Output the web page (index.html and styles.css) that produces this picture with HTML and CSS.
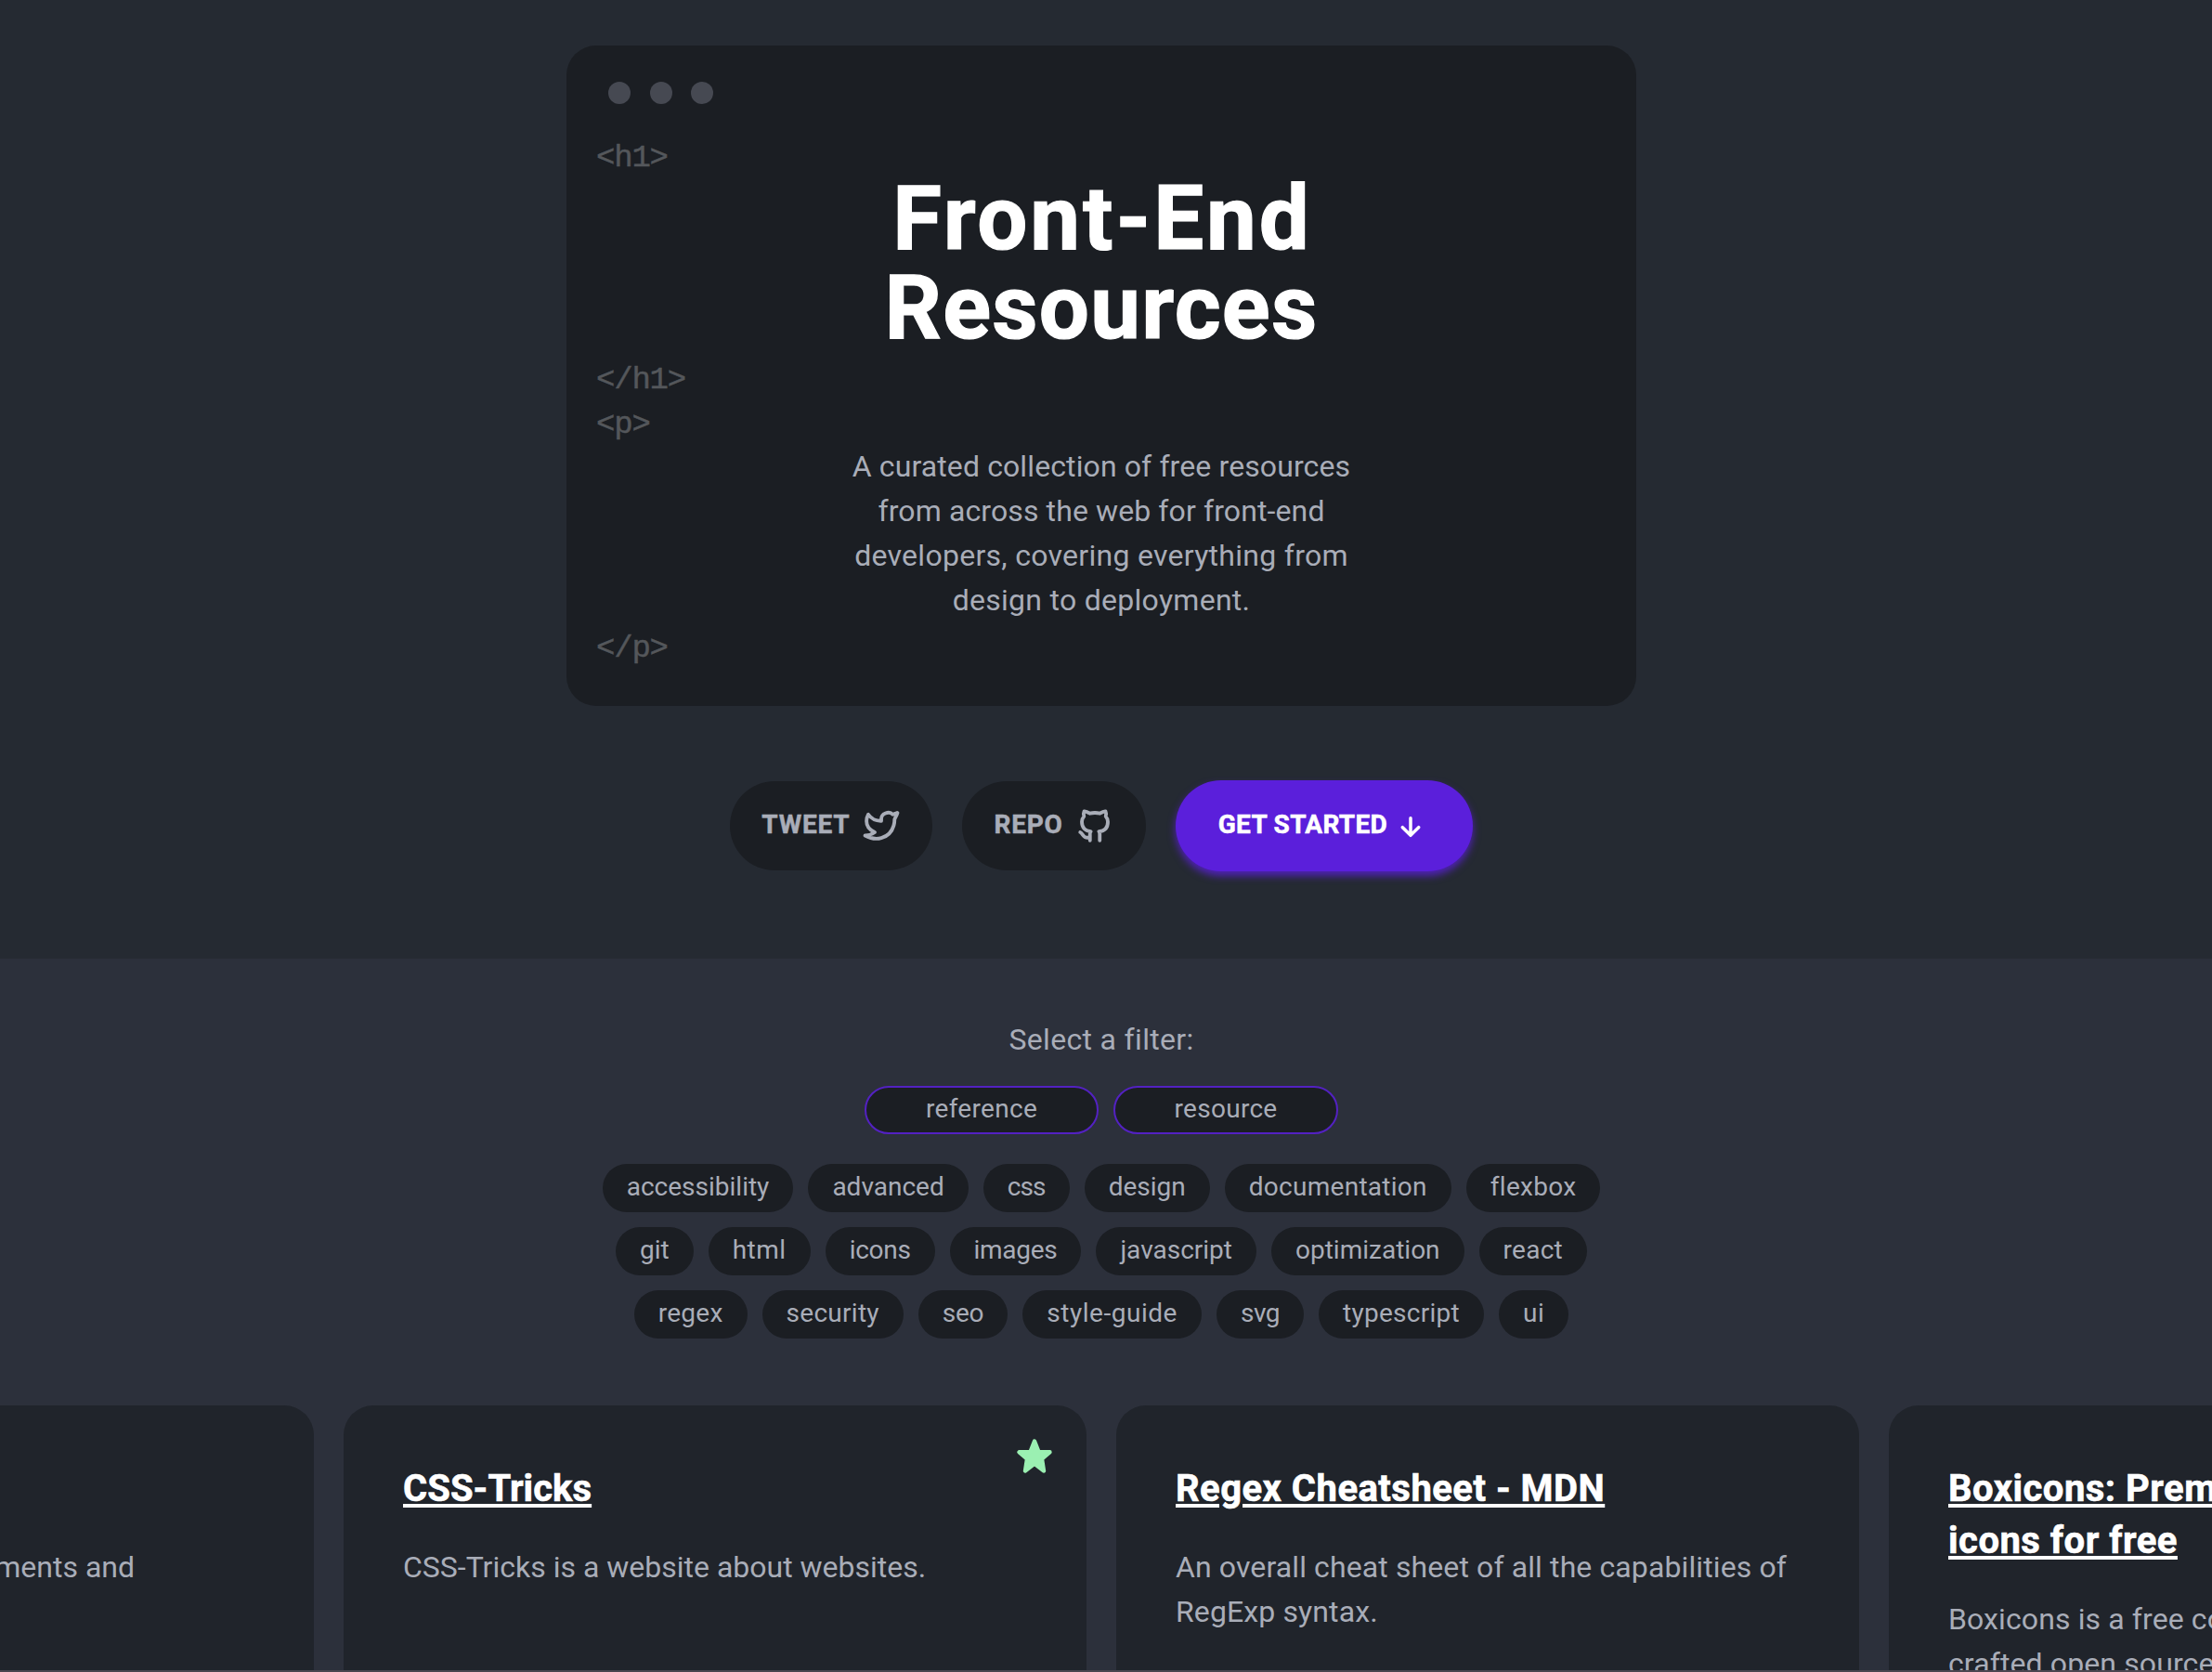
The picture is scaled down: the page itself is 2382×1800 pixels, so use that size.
FILE: index.html
```
<!DOCTYPE html>
<html lang="en">
<head>
<meta charset="utf-8">
<title>Front-End Resources</title>
<link rel="stylesheet" href="styles.css">
</head>
<body>
<header class="hero">
  <div class="window">
    <div class="dots"><span class="dot"></span><span class="dot"></span><span class="dot"></span></div>
    <code class="code">&lt;h1&gt;</code>
    <h1 class="title"><span class="title-top">Front-End</span><br>Resources</h1>
    <code class="code">&lt;/h1&gt;</code>
    <code class="code">&lt;p&gt;</code>
    <p class="intro">A curated collection of free resources<br>from across the web for front-end<br><span class="open">developers, covering everything from</span><br><span class="open">design to deployment.</span></p>
    <code class="code">&lt;/p&gt;</code>
  </div>
  <nav class="actions">
    <a class="button"><span class="button-text">TWEET</span>
      <svg class="icon" viewBox="0 0 24 24"><path d="M22 4.01c-1 .49-1.98.689-3 .99-1.121-1.265-2.783-1.335-4.38-.737S11.977 6.323 12 8v1c-3.245.083-6.135-1.395-8-4 0 0-4.182 7.433 4 11-1.872 1.247-3.739 2.088-6 2 3.308 1.803 6.913 2.423 10.034 1.517 3.58-1.04 6.522-3.723 7.651-7.742a13.84 13.84 0 0 0 .497-3.753c0-.249 1.51-2.772 1.818-4.013z"/></svg>
    </a>
    <a class="button"><span class="button-text">REPO</span>
      <svg class="icon" viewBox="0 0 24 24"><path d="M9 19c-4.3 1.4-4.3-2.5-6-3m12 5v-3.5c0-1 .1-1.4-.5-2 2.8-.3 5.5-1.4 5.5-6a4.6 4.6 0 0 0-1.3-3.2 4.2 4.2 0 0 0-.1-3.2s-1.1-.3-3.5 1.300a12.300 12.300 0 0 0-6.200 0C6.500 2.800 5.400 3.100 5.400 3.100a4.200 4.200 0 0 0-.1 3.200A4.600 4.600 0 0 0 4 9.500c0 4.600 2.700 5.700 5.500 6-.6.6-.6 1.200-.5 2V21"/></svg>
    </a>
    <a class="button button-primary"><span class="button-text">GET STARTED</span>
      <svg class="icon-arrow" viewBox="0 0 24 24"><path d="M12 5v13.500M5.500 12.500 12 19l6.500-6.500"/></svg>
    </a>
  </nav>
</header>

<main class="browse">
  <p class="label">Select a filter:</p>
  <div class="tags">
    <span class="tag kind kind-reference">reference</span><span class="tag kind kind-resource">resource</span>
  </div>
  <div class="tags topics">
    <span class="tag">accessibility</span><span class="tag">advanced</span><span class="tag tightest">css</span><span class="tag">design</span><span class="tag loose">documentation</span><span class="tag loose">flexbox</span>
    <span class="tag">git</span><span class="tag looser">html</span><span class="tag tight">icons</span><span class="tag tight">images</span><span class="tag">javascript</span><span class="tag">optimization</span><span class="tag loose">react</span>
    <span class="tag loose">regex</span><span class="tag loose">security</span><span class="tag tight">seo</span><span class="tag looser">style-guide</span><span class="tag tighter">svg</span><span class="tag loose">typescript</span><span class="tag looser">ui</span>
  </div>
  <section class="cards">
    <article class="card">
      <p class="card-text card-text-end">ments and</p>
    </article>
    <article class="card">
      <svg class="star" viewBox="0 0 38 37"><path d="M19 2.500l4.500 11.500 12 .3-8.500 7.200 2 13-10-7.700-10 7.700 2-13-8.500-7.200 12-.3z"/></svg>
      <h2 class="card-title card-title-plain">CSS-Tricks</h2>
      <p class="card-text card-text-plain">CSS-Tricks is a website about websites.</p>
    </article>
    <article class="card">
      <h2 class="card-title">Regex Cheatsheet - MDN</h2>
      <p class="card-text">An overall cheat sheet of all the capabilities of<br>RegExp syntax.</p>
    </article>
    <article class="card">
      <h2 class="card-title">Boxicons: Premium web friendly<br>icons for free</h2>
      <p class="card-text">Boxicons is a free collection of carefully<br>crafted open source icons.</p>
    </article>
  </section>
</main>
</body>
</html>
```
FILE: styles.css
```
* { box-sizing: border-box; }

body {
  margin: 0;
  height: 1800px;
  display: flex;
  flex-direction: column;
  overflow: hidden;
  background: #2c303b;
  border-bottom: 2px solid #4b4750;
  color: #a9adb8;
  font: 32px/48px Roboto, "Liberation Sans", sans-serif;
}

h1, h2, p { margin: 0; }

.hero {
  flex: none;
  height: 1032px;
  padding: 49px 10px 0 0;
  background: #252a32;
  display: flex;
  flex-direction: column;
  align-items: center;
}

.window {
  width: 1152px;
  height: 711px;
  padding: 39px 32px 0;
  border-radius: 32px;
  background: #1b1e23;
  display: flex;
  flex-direction: column;
}

.dots {
  display: flex;
  gap: 20.5px;
  margin: 0 0 34px 13px;
}

.dot {
  width: 24px;
  height: 24px;
  border-radius: 50%;
  background: #464952;
}

.code {
  font: 34px/48px "Liberation Mono", monospace;
  letter-spacing: -1.2px;
  color: #54575b;
  -webkit-text-stroke: 0.5px currentColor;
}

.title {
  margin: -7px 0 6px;
  font-size: 96px;
  line-height: 96px;
  font-weight: 700;
  letter-spacing: 1.2px;
  text-align: center;
  text-indent: 2px;
  color: #fff;
  -webkit-text-stroke: 1.2px currentColor;
}

.title-top { letter-spacing: 2.9px; }

.intro {
  margin: -3px 0 4px;
  text-align: center;
  letter-spacing: 0.11px;
}

.open { letter-spacing: 0.28px; }

.actions {
  margin-top: 80px;
  display: flex;
  align-items: center;
  gap: 32px;
}

.button {
  height: 96px;
  padding: 0 34px;
  border-radius: 48px;
  background: #1b1e23;
  display: flex;
  align-items: center;
  gap: 13px;
  font-size: 28px;
  font-weight: 700;
}

.button-text {
  margin-top: -3px;
  letter-spacing: 0.8px;
  -webkit-text-stroke: 0.5px currentColor;
}

.button-primary {
  width: 320px;
  height: 98px;
  padding: 0 46px;
  border-radius: 49px;
  background: #5b1fdb;
  box-shadow: 0 5px 8px rgba(91, 31, 219, 0.8);
  color: #fff;
  gap: 9px;
}

.button-primary .button-text { letter-spacing: 0.3px; }

.icon, .icon-arrow {
  width: 42px;
  height: 42px;
  fill: none;
  stroke: currentColor;
  stroke-width: 2.2;
  stroke-linecap: round;
  stroke-linejoin: round;
}

.icon-arrow {
  width: 32px;
  height: 32px;
  margin-top: 2px;
  stroke-width: 2.6;
}

.browse {
  flex: 1;
  min-height: 0;
  padding: 63px 10px 0 0;
  display: flex;
  flex-direction: column;
  align-items: center;
}

.label { letter-spacing: 0.33px; }

.tags {
  width: 1152px;
  margin-top: 26px;
  display: flex;
  flex-wrap: wrap;
  justify-content: center;
  gap: 16px;
}

.topics { margin: 32px 0 72px; }

.tag {
  height: 52px;
  padding: 1px 26px 3px;
  border-radius: 26px;
  background: #1b1e23;
  font-size: 28px;
}

.kind {
  padding: 0;
  border: 2px solid #5321c2;
  line-height: 46px;
  text-align: center;
  letter-spacing: 0.3px;
}

.kind-reference { width: 252px; }
.kind-resource { width: 242px; }

.tightest { letter-spacing: -0.87px; }
.tighter { letter-spacing: -0.5px; }
.tight { letter-spacing: -0.3px; }
.loose { letter-spacing: 0.27px; }
.looser { letter-spacing: 0.53px; }

.cards {
  flex: none;
  display: flex;
  gap: 32px;
}

.card {
  position: relative;
  width: 800px;
  height: 400px;
  padding: 62px 64px;
  border-radius: 32px;
  background: #20242b;
}

.card-title {
  margin-bottom: 32px;
  font-size: 40px;
  line-height: 56px;
  font-weight: 700;
  letter-spacing: 0.48px;
  color: #fff;
  white-space: nowrap;
  text-decoration: underline;
  text-decoration-thickness: 4px;
  text-underline-offset: 3px;
  -webkit-text-stroke: 0.6px currentColor;
}

.card-title-plain { letter-spacing: 0.05px; }

.card-text {
  letter-spacing: 0.11px;
  white-space: nowrap;
}

.card-text-plain { letter-spacing: 0; }

.card-text-end {
  width: 543px;
  margin-top: 88px;
  letter-spacing: 0;
  text-align: right;
}

.star {
  position: absolute;
  top: 36px;
  right: 37px;
  width: 38px;
  height: 37px;
  fill: #9bf0b2;
  stroke: #9bf0b2;
  stroke-width: 4.4;
  stroke-linejoin: round;
}
```
